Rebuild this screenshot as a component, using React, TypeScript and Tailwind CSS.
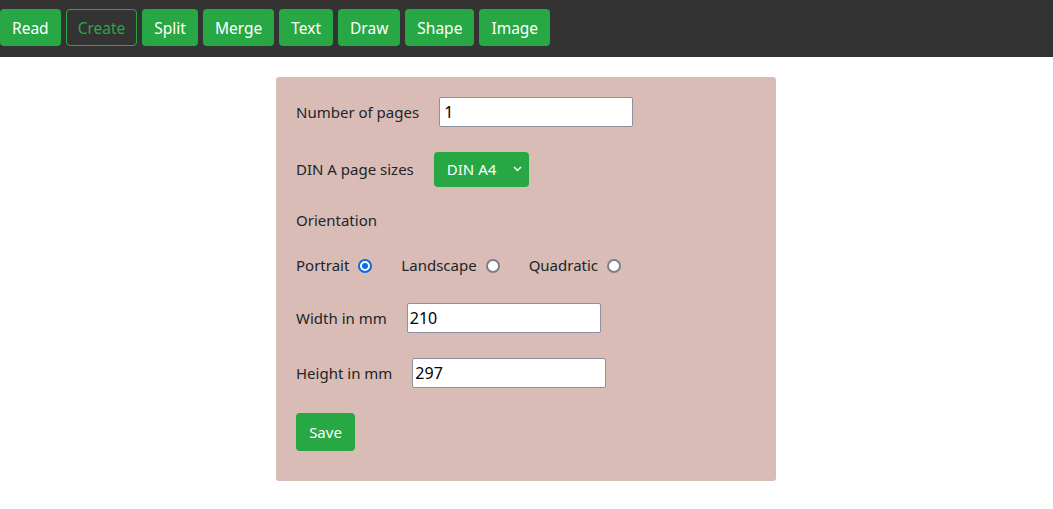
import React, { useState } from 'react';

const tabs = ['Read', 'Create', 'Split', 'Merge', 'Text', 'Draw', 'Shape', 'Image'];

const orientations = [
  { id: 'portrait', label: 'Portrait' },
  { id: 'landscape', label: 'Landscape' },
  { id: 'quadratic', label: 'Quadratic' },
];

export default function App() {
  const [orientation, setOrientation] = useState('portrait');
  const font = { fontFamily: '"Segoe UI", "Noto Sans", sans-serif' };

  return (
    <div className="min-h-[509px] bg-white text-[15px] text-[#212529]" style={font}>
      <nav className="flex gap-[5px] bg-[#333333] pt-[9px] pb-[11px]">
        {tabs.map((t) =>
          t === 'Create' ? (
            <button
              key={t}
              className="h-[37px] rounded-[4px] border border-solid border-[#28a745] px-[11px] pt-[1px] text-[15.5px] leading-[24px] text-[#28a745]"
            >
              {t}
            </button>
          ) : (
            <button
              key={t}
              className="h-[37px] rounded-[4px] bg-[#28a745] px-[12px] pt-[1px] text-[15.5px] leading-[24px] text-white"
            >
              {t}
            </button>
          )
        )}
      </nav>

      <div className="mt-[20px] flex justify-center">
        <div className="mr-[1px] w-[500px] rounded-[3px] bg-[#d9bcb6] px-[20px] pt-[20px] pb-[30px]">
          <div className="flex items-center">
            <label className="mr-[20px]">Number of pages</label>
            <input
              defaultValue="1"
              className="h-[30px] w-[194px] rounded-[2px] border border-[#8f8f9d] bg-white px-[4px] text-[16px] text-black"
            />
          </div>

          <div className="mt-[25px] flex items-center">
            <label className="mr-[20px]">DIN A page sizes</label>
            <div className="relative">
              <select className="h-[35px] w-[95px] appearance-none rounded-[4px] bg-[#28a745] pl-[13px] text-white outline-none">
                <option>DIN A4</option>
                <option>DIN A3</option>
                <option>DIN A5</option>
              </select>
              <svg
                className="pointer-events-none absolute right-[7px] top-[14px]"
                width="9"
                height="6"
                viewBox="0 0 9 6"
                fill="none"
                stroke="white"
                strokeWidth="1.5"
              >
                <path d="M1 1l3.5 3.5L8 1" />
              </svg>
            </div>
          </div>

          <div className="mt-[21px] leading-[24px]">Orientation</div>

          <div className="mt-[21px] flex items-center leading-[24px]">
            {orientations.map((o, i) => {
              const on = orientation === o.id;
              return (
                <label
                  key={o.id}
                  className={`flex cursor-pointer items-center ${i > 0 ? 'ml-[29px]' : ''}`}
                  onClick={() => setOrientation(o.id)}
                >
                  {o.label}
                  <span
                    className={
                      on
                        ? 'ml-[9px] mt-[1px] flex h-[14px] w-[14px] items-center justify-center rounded-full border-[2px] border-[#0a6ae0] bg-white'
                        : 'ml-[9px] mt-[1px] h-[14px] w-[14px] rounded-full border-[2px] border-[#7e7f86] bg-white'
                    }
                  >
                    {on && <span className="h-[6px] w-[6px] rounded-full bg-[#0a6ae0]" />}
                  </span>
                </label>
              );
            })}
          </div>

          <div className="mt-[26px] flex items-center">
            <label className="mr-[20px]">Width in mm</label>
            <input
              defaultValue="210"
              className="h-[30px] w-[194px] rounded-[2px] border border-[#8f8f9d] bg-white px-[2px] text-[16px] text-black"
            />
          </div>

          <div className="mt-[25px] flex items-center">
            <label className="mr-[20px]">Height in mm</label>
            <input
              defaultValue="297"
              className="h-[30px] w-[194px] rounded-[2px] border border-[#8f8f9d] bg-white px-[2px] text-[16px] text-black"
            />
          </div>

          <button className="mt-[25px] h-[38px] w-[59px] rounded-[4px] bg-[#28a745] text-white">
            Save
          </button>
        </div>
      </div>
    </div>
  );
}
